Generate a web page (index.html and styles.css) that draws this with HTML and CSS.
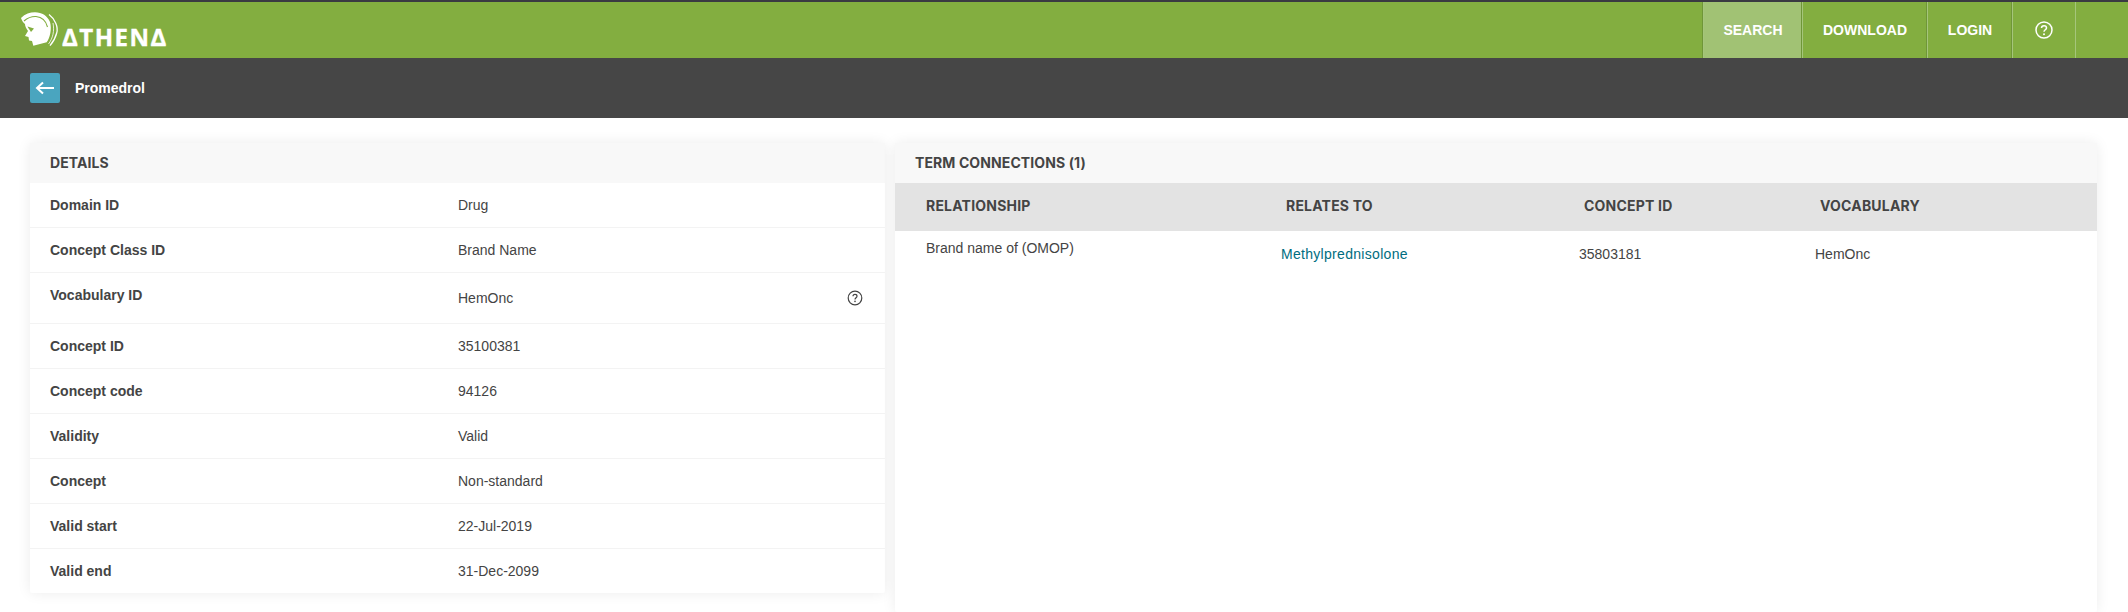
FILE: index.html
```html
<!DOCTYPE html>
<html lang="en">
<head>
  <meta charset="UTF-8">
  <title>Promedrol - Athena</title>
  <meta name="viewport" content="width=device-width, initial-scale=1.0">
  <link rel="stylesheet" href="styles.css">
</head>
<body>

<header class="topbar">
  <a class="brand" href="#">
    <svg class="brand-helmet" viewBox="0 0 40 38" width="40" height="38" aria-hidden="true">
      <path fill="#fff" d="M1 7C5 3 10 1.300 15 1.300C22 1.300 27.500 5 30 11C32 18 30 27 26.700 31.300L13.300 34.700L12 30L9 29.500L8.500 26L5 25L8 20C6 17 5 15 5 13C3.500 12 2 10 1 7Z"/>
      <path fill="none" stroke="#83ae40" stroke-width="1.100" d="M4 10C8 6.500 12 5.300 16 5.500C22 6 26 10 27.500 16"/>
      <path fill="#83ae40" d="M7.500 15.500L14 17.500L11 21C9.500 18.500 8.300 17 7.500 15.500Z"/>
      <path fill="none" stroke="#fff" stroke-width="1.300" d="M29 3.500C35 8 38.500 16 36.700 22C35.500 27 33 31 30 34.700"/>
      <path fill="none" stroke="#fff" stroke-width="0.800" d="M33 12C34.500 20 33 27 28.500 33"/>
    </svg>
    <span class="brand-name">ΔTHENΔ</span>
  </a>
  <nav class="topnav">
    <a class="topnav-item active" href="#">SEARCH</a>
    <a class="topnav-item" href="#">DOWNLOAD</a>
    <a class="topnav-item" href="#">LOGIN</a>
    <a class="topnav-item topnav-help" href="#">
      <svg viewBox="0 0 18 18" width="18" height="18" aria-hidden="true">
        <circle cx="9" cy="9" r="8" fill="none" stroke="#fff" stroke-width="1.500"/>
        <path d="M6.500 7C6.500 5.500 7.700 4.700 9 4.700C10.400 4.700 11.500 5.600 11.500 6.900C11.500 8.700 9 8.800 9 10.800" fill="none" stroke="#fff" stroke-width="1.500"/>
        <circle cx="9" cy="13.200" r="1" fill="#fff"/>
      </svg>
    </a>
  </nav>
</header>

<div class="subbar">
  <a class="back-btn" href="#">
    <svg viewBox="0 0 20 14" width="20" height="14" aria-hidden="true">
      <path d="M2 7H19M8 1.500L2 7L8 12.500" fill="none" stroke="#fff" stroke-width="2"/>
    </svg>
  </a>
  <span class="subbar-title">Promedrol</span>
</div>

<main class="content">
  <section class="card details">
    <h3 class="card-title">DETAILS</h3>
    <div class="detail-row"><span class="detail-label">Domain ID</span><span>Drug</span></div>
    <div class="detail-row"><span class="detail-label">Concept Class ID</span><span>Brand Name</span></div>
    <div class="detail-row detail-row-tall">
      <span class="detail-label">Vocabulary ID</span>
      <span class="detail-value-low">HemOnc</span>
      <svg class="detail-help" viewBox="0 0 16 16" width="16" height="16" aria-hidden="true">
        <circle cx="8" cy="8" r="6.800" fill="none" stroke="#444" stroke-width="1.200"/>
        <path d="M6 6.300C6 5 7 4.400 8 4.400C9.100 4.400 10 5.100 10 6.200C10 7.700 8 7.800 8 9.500" fill="none" stroke="#444" stroke-width="1.200"/>
        <circle cx="8" cy="11.400" r="0.800" fill="#444"/>
      </svg>
    </div>
    <div class="detail-row"><span class="detail-label">Concept ID</span><span>35100381</span></div>
    <div class="detail-row"><span class="detail-label">Concept code</span><span>94126</span></div>
    <div class="detail-row"><span class="detail-label">Validity</span><span>Valid</span></div>
    <div class="detail-row"><span class="detail-label">Concept</span><span>Non-standard</span></div>
    <div class="detail-row"><span class="detail-label">Valid start</span><span>22-Jul-2019</span></div>
    <div class="detail-row"><span class="detail-label">Valid end</span><span>31-Dec-2099</span></div>
  </section>

  <section class="card connections">
    <h3 class="card-title">TERM CONNECTIONS (1)</h3>
    <div class="conn-head">
      <span>RELATIONSHIP</span>
      <span>RELATES TO</span>
      <span>CONCEPT ID</span>
      <span>VOCABULARY</span>
    </div>
    <div class="conn-row">
      <span class="conn-relationship">Brand name of (OMOP)</span>
      <a class="conn-link" href="#">Methylprednisolone</a>
      <span>35803181</span>
      <span>HemOnc</span>
    </div>
  </section>
</main>

</body>
</html>
```

FILE: styles.css
```css
* { box-sizing: border-box; }
html, body { height: 100%; }
body {
  margin: 0;
  overflow: hidden;
  background: #fff;
  color: #444;
  font-family: "Liberation Sans", Arial, sans-serif;
  font-size: 14px;
}
a { text-decoration: none; color: inherit; }

/* top green bar */
.topbar {
  display: flex;
  justify-content: space-between;
  height: 58px;
  background: #83ae40;
  border-top: 2px solid #3a3a42;
  color: #fff;
}
.brand {
  display: flex;
  align-items: flex-end;
  padding: 0 0 10px 20px;
}
.brand-helmet { margin-bottom: -1px; }
.brand-name {
  margin-left: 2px;
  font-family: "Open Sans", sans-serif;
  font-size: 24px;
  font-weight: 700;
  line-height: 22px;
  letter-spacing: 1.5px;
  -webkit-text-stroke: 0.4px #fff;
}
.topnav { display: flex; padding-right: 52px; }
.topnav-item {
  display: flex;
  align-items: center;
  justify-content: center;
  font-weight: 700;
  border-left: 1px solid #a5c57b;
  box-shadow: -1px 0 0 #6f9638;
}
.topnav-item:nth-child(1) { width: 99px; }
.topnav-item:nth-child(2) { width: 125px; }
.topnav-item:nth-child(3) { width: 85px; }
.topnav-item:nth-child(4) {
  width: 64px;
  border-right: 1px solid #a5c57b;
}
.topnav-item.active { background: #a1c274; }

/* dark bar under the header */
.subbar {
  display: flex;
  align-items: center;
  height: 60px;
  padding-left: 30px;
  background: #464646;
  color: #fff;
}
.back-btn {
  display: flex;
  align-items: center;
  justify-content: center;
  width: 30px;
  height: 30px;
  border-radius: 2px;
  background: #4aa5bf;
}
.subbar-title {
  margin-left: 15px;
  font-weight: 700;
}

/* cards */
.content {
  display: flex;
  align-items: flex-start;
  gap: 10px;
  padding: 25px 31px 0 30px;
}
.card {
  background: #fff;
  box-shadow: 0 0 14px rgba(0, 0, 0, 0.08);
  border-radius: 2px;
}
.card-title {
  display: flex;
  align-items: center;
  height: 40px;
  margin: 0;
  padding: 0 0 2px 20px;
  background: #f8f8f8;
  font-family: Inter, sans-serif;
  font-size: 14px;
  font-weight: 700;
  letter-spacing: 0.1px;
}
.details { width: 855px; height: 450px; }
.connections { flex: 1; height: 469px; }

.detail-row {
  display: grid;
  grid-template-columns: 408px 1fr;
  align-items: center;
  position: relative;
  height: 45px;
  padding-left: 20px;
  border-bottom: 1px solid #f3f3f3;
}
.detail-row:last-child { border-bottom: 0; height: 44px; }
.detail-row-tall { height: 51px; padding-bottom: 6px; }
.detail-label { font-weight: 700; }
.detail-value-low { padding-top: 6px; }
.detail-help {
  position: absolute;
  top: 17px;
  right: 22px;
}

.conn-head,
.conn-row {
  display: grid;
  grid-template-columns: 360px 298px 236px 1fr;
}
.conn-head {
  align-items: center;
  height: 48px;
  padding: 0 0 3px 31px;
  background: #e3e3e3;
  font-family: Inter, sans-serif;
  font-size: 14px;
  font-weight: 700;
  letter-spacing: 0.2px;
}
.conn-row {
  padding: 15px 0 0 26px;
  line-height: 16px;
}
.conn-relationship { padding-left: 5px; margin-top: -6px; }
.conn-link { color: #006d80; letter-spacing: 0.3px; }
```
